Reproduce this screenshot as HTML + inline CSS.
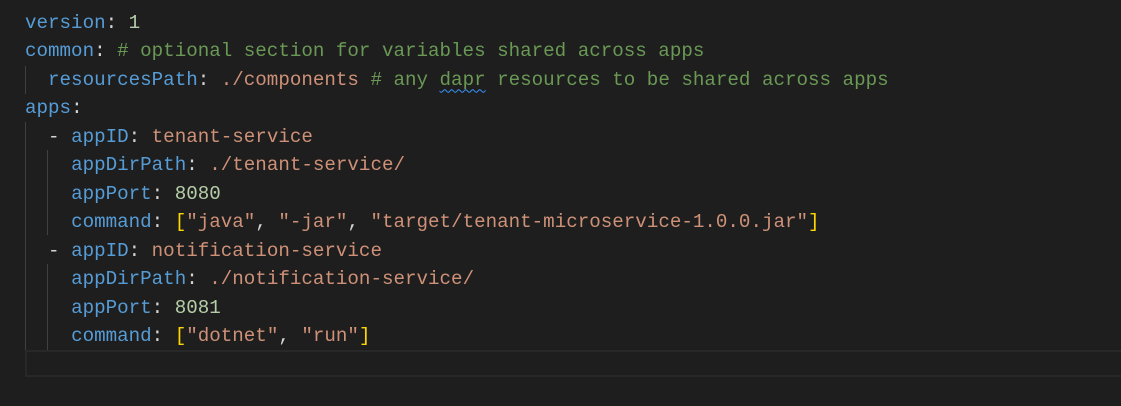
<!DOCTYPE html>
<html><head><style>
body{margin:0;background:#1e1e1e;width:1121px;height:406px;overflow:hidden;position:relative}
.l{position:absolute;left:25px;height:28.5px;line-height:28.5px;font-family:"Liberation Mono",monospace;font-size:19.2px;color:#d4d4d4;white-space:pre}
.k{color:#569cd6}.s{color:#ce9178}.c{color:#6a9955}.n{color:#b5cea8}.b{color:#ffd700}
.g{position:absolute;width:1px;background:#404040}
.u{text-decoration:underline wavy #3794ff;text-decoration-thickness:1px;text-underline-offset:4px}
</style></head><body>
<div style="position:absolute;left:25px;top:350px;width:1096px;height:27px;border:2px solid #282828;border-right:none;box-sizing:border-box"></div>
<div class="g" style="left:25px;top:66px;height:28px"></div>
<div class="g" style="left:25px;top:122px;height:228px"></div>
<div class="g" style="left:47px;top:150px;height:85px"></div>
<div class="g" style="left:47px;top:264px;height:86px"></div>
<div class="l" style="top:8.5px"><span class="k">version</span>: <span class="n">1</span></div>
<div class="l" style="top:37px"><span class="k">common</span>: <span class="c"># optional section for variables shared across apps</span></div>
<div class="l" style="top:65.5px">  <span class="k">resourcesPath</span>: <span class="s">./components</span> <span class="c"># any <span class="u">dapr</span> resources to be shared across apps</span></div>
<div class="l" style="top:94px"><span class="k">apps</span>:</div>
<div class="l" style="top:122.5px">  - <span class="k">appID</span>: <span class="s">tenant-service</span></div>
<div class="l" style="top:151px">    <span class="k">appDirPath</span>: <span class="s">./tenant-service/</span></div>
<div class="l" style="top:179.5px">    <span class="k">appPort</span>: <span class="n">8080</span></div>
<div class="l" style="top:208px">    <span class="k">command</span>: <span class="b">[</span><span class="s">"java"</span>, <span class="s">"-jar"</span>, <span class="s">"target/tenant-microservice-1.0.0.jar"</span><span class="b">]</span></div>
<div class="l" style="top:236.5px">  - <span class="k">appID</span>: <span class="s">notification-service</span></div>
<div class="l" style="top:265px">    <span class="k">appDirPath</span>: <span class="s">./notification-service/</span></div>
<div class="l" style="top:293.5px">    <span class="k">appPort</span>: <span class="n">8081</span></div>
<div class="l" style="top:322px">    <span class="k">command</span>: <span class="b">[</span><span class="s">"dotnet"</span>, <span class="s">"run"</span><span class="b">]</span></div>
</body></html>
